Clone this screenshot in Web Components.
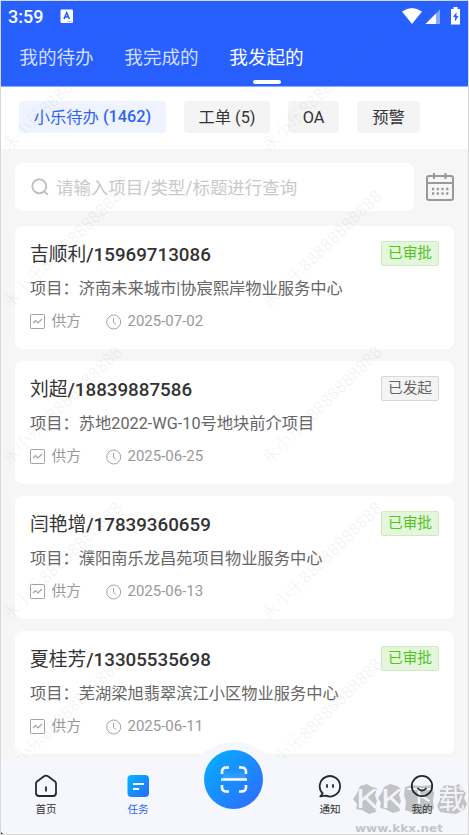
<!DOCTYPE html>
<html lang="zh-CN"><head><meta charset="utf-8"><title>我发起的</title>
<style>html,body{margin:0;padding:0;overflow:hidden}body{font-family:Roboto,"Noto Sans CJK SC",sans-serif;color:#333}</style></head>
<body><task-screen></task-screen>
<script>
const define = (name, html) => customElements.define(name, class extends HTMLElement {
  constructor() {
    super();
    const t = document.createElement('template');
    t.innerHTML = typeof html === 'function' ? html(this) : html;
    this.attachShadow({ mode: 'open' }).append(t.content.cloneNode(true));
  }
});

define('status-bar', `<style>
:host{display:flex;height:30px;align-items:center;padding:0 7px 0 7px;color:#fff;font-size:18px;font-weight:500;box-sizing:border-box}
svg{display:block}.a{margin-left:17px}.r{margin-left:auto}</style>
<span>3:59</span>
<svg class="a" width="14" height="15" viewBox="0 0 14 15"><rect x=".5" y=".5" width="12.500" height="13.500" rx="1.200" fill="#fff"/><path d="M4 10 6.700 3.700 9.400 10M5 8h3.500" fill="none" stroke="#2860ff" stroke-width="1.600"/><path d="M7.500 12.500h4" stroke="#779bff" stroke-dasharray="1 .6"/></svg>
<svg class="r" width="60" height="20" viewBox="0 0 60 20"><path d="M1 5.500Q11 -1.500 21 5.500L11 18Z" fill="#fff"/><path d="M24.500 18H39V3.500Z" fill="#8aa9ff"/><path d="M24.500 18H35V7.500Z" fill="#fff"/><path d="M50 3h2.500V1h4v2H59v15.500h-9Z" fill="#fff"/><path d="M55.500 6 52 11h2v4.500L57.500 10h-2Z" fill="#2860ff"/></svg>`);

define('top-tab', `<style>
:host{display:flex;flex-direction:column;align-items:center;width:75px;height:56px;font-size:18.600px;line-height:54px;color:#d2deff;white-space:nowrap}
:host([active]){color:#fff}
i{display:none;width:28px;height:4px;border-radius:2px;background:#fff;margin-top:-5px}
:host([active]) i{display:block}</style><slot></slot><i></i>`);

define('filter-chip', `<style>
:host{display:flex;box-sizing:border-box;height:32px;align-items:center;justify-content:center;border-radius:4px;background:#f4f4f4;font-size:16.300px;white-space:pre;padding-bottom:2px}
:host([latin]){padding-bottom:0}
:host([active]){background:#eef3ff;color:#2f63f5}</style><slot></slot>`);

define('search-row', `<style>
:host{display:flex;align-items:center;margin:14px 14px 15px;height:48px}
.box{display:flex;align-items:center;flex:none;width:399px;height:48px;border-radius:8px;background:#fff;color:#c8c9cc;font-size:17.450px;box-sizing:border-box;padding-left:16px;white-space:nowrap}
.box svg{margin-right:7px}.box span{padding-bottom:2px}.cal{flex:none;margin-left:11px}</style>
<div class="box"><svg width="18" height="18" viewBox="0 0 18 18" fill="none" stroke="#bcbdc0" stroke-width="1.800"><circle cx="8.300" cy="8.300" r="7"/><path d="m13.300 13.300 3.500 3.500"/></svg><span>请输入项目/类型/标题进行查询</span></div>
<svg class="cal" width="30" height="30" viewBox="0 0 30 30" fill="none" stroke="#999"><rect x="2" y="4" width="26" height="24" rx="2" stroke-width="2"/><path d="M2 11h26M9 1v6M20.500 1v6" stroke-width="2"/><path d="M7 17h18M7 21.500h18" stroke-width="2.300" stroke-dasharray="2.200 2.500"/></svg>`);

define('status-tag', `<style>
:host{display:flex;box-sizing:border-box;width:58px;height:25px;align-items:center;justify-content:center;border:1px solid #cdebc2;border-radius:2px;background:#e4f6dc;color:#52c41a;font-size:14.700px;line-height:22px;padding-bottom:1px}
:host([plain]){border-color:#d8d8d8;background:#f4f4f4;color:#666}</style><slot></slot>`);

define('task-card', `<style>
:host{display:block;box-sizing:border-box;height:123px;margin:0 14px 12px;padding:15px;border-radius:8px;background:#fff}
header{display:flex;justify-content:space-between;height:28px}
.name{font-size:18.750px;line-height:29px;color:#333}
.project{font-size:16.250px;line-height:24px;margin-top:8px;color:#666;white-space:nowrap}
footer{display:flex;align-items:center;height:20px;margin-top:10px;font-size:15px;line-height:20px;color:#999}
svg{display:block;flex:none;margin-top:1px}.kind{display:block;width:54px;margin-left:6.500px;padding-bottom:1px;font-size:14.700px}.date{margin-left:6px;padding-bottom:1px}</style>
<header><span class="name"><slot name="name"></slot></span><slot name="state"></slot></header>
<div class="project">项目：<slot name="project"></slot></div>
<footer><svg width="15" height="16" viewBox="0 0 15 16" fill="none" stroke="#a4a4a4"><rect x=".5" y=".5" width="14" height="14" rx=".7"/><path d="m3 9 2.500-2.500 2.500 2.500 4-4" stroke-width="1.200"/></svg><span class="kind">供方</span>
<svg width="16" height="16" viewBox="0 0 16 16" fill="none" stroke="#a4a4a4"><circle cx="7.700" cy="8" r="7"/><path d="M7.500 4v4.500l2.500 2"/></svg><span class="date"><slot name="date"></slot></span></footer>`);

define('water-mark', `<style>
:host{position:absolute;inset:0;overflow:hidden;pointer-events:none;color:rgba(50,50,50,.06);font-size:17.300px}
span{position:absolute;width:162px;height:18px;line-height:18px;display:flex;justify-content:center;white-space:nowrap;letter-spacing:.1px;transform:rotate(-44.500deg)}</style>` +
[91,248,404,560,716].flatMap(y => [61,321].map(x => `<span style="left:${x-81}px;top:${y-9}px">永小乐88888888888</span>`)).join(''));

const icons = {
  home: '<path d="M2 9.500Q2 8.300 3 7.500L10 2.300Q12 1 14 2.300L21 7.500Q22 8.300 22 9.500V19Q22 22 19 22H5Q2 22 2 19Z"/><path d="M12 12.500v5"/>',
  task: '<defs><linearGradient id="g" x1="0" y1="0" x2="1" y2="1"><stop stop-color="#00b8ff"/><stop offset="1" stop-color="#2c69ff"/></linearGradient></defs><rect x="1.500" y="1" width="21.500" height="22" rx="4" fill="url(#g)" stroke="none"/><path d="M7 10h11M7 15h6" stroke="#fff" stroke-width="2"/>',
  chat: '<path d="M4.700 19.500A10.200 10.200 0 1 1 8 21.700L2.300 22.300Z"/><path d="M9 10.300v3.400M15 10.300v3.400"/>',
  me: '<circle cx="12" cy="12" r="10.200"/><path d="M7.500 14Q12 19 16.500 14"/>'
};
define('nav-item', el => `<style>
:host{display:flex;flex-direction:column;align-items:center;width:92px;padding-top:16px;font-size:10.600px;color:#333;box-sizing:border-box}
:host([active]){color:#2f63f5}svg{display:block}span{line-height:15px;margin-top:4px}</style>
<svg width="24" height="24" viewBox="0 0 24 24" fill="none" stroke="#26282e" stroke-width="1.800" stroke-linejoin="round">${icons[el.getAttribute('icon')]}</svg><span><slot></slot></span>`);

define('scan-button', `<style>:host{display:block;width:59px;height:59px;margin-top:-8px}svg{display:block}</style>
<svg width="59" height="59" viewBox="0 0 59 59"><defs><linearGradient id="b" x1=".1" y1=".1" x2=".9" y2=".9"><stop stop-color="#08aaff"/><stop offset="1" stop-color="#2c6fff"/></linearGradient><linearGradient id="l" x2="0" y2="1"><stop stop-color="#64b9ff" stop-opacity="0"/><stop offset="1" stop-color="#64b9ff" stop-opacity=".5"/></linearGradient></defs><circle cx="29.500" cy="29.500" r="29.500" fill="url(#b)"/><path fill="url(#l)" d="M19 20h23v9H19Z"/><path d="M17 29.500h26M18 24V22q0-4.500 4.500-4.500H25M35 17.500h2.500q4.500 0 4.500 4.500v2M18 35v2q0 4.500 4.500 4.500H25M35 41.500h2.500q4.500 0 4.500-4.500v-2" fill="none" stroke="#fff" stroke-width="2.600"/></svg>`);

define('site-badge', `<style>:host{position:absolute;left:352px;top:39px;width:115px;height:54px}svg{display:block}</style>
<svg width="115" height="54" viewBox="0 0 115 54"><g fill="#c2c3c7"><path d="m7 5 7-2 5 3 5 1-2 7 2 6-2 6 1 5-7 2-7-4-6-1 1-5-4-5 4-6Z"/><path d="m31 6 6-3 7 2 4 3-2 6 2 6-2 5 1 5-7 2-8-4-5-1 1-5-3-5 4-6Z"/><path d="m52 6 7-2 8 1 12-1 2 8-1 8 1 7-5 5-13 1-11-4 1-8-2-7Z"/><path d="m87 9 5-5 9 1 5-2 4 6 3 3-2 5 3 6-3 6-8 4-9-1-7-1-3-6 3-6Z"/></g>
<g fill="#f3f4f8"><text x="3" y="27" font-size="26" textLength="22" lengthAdjust="spacingAndGlyphs">K</text><text x="28" y="27" font-size="26" textLength="22" lengthAdjust="spacingAndGlyphs">K</text><text x="53" y="28" font-size="27">下</text><text x="85" y="28" font-size="27">载</text></g>
<text x="2" y="51" fill="#c4c5c9" font-family="DejaVu Sans" font-weight="700" font-size="11" textLength="88" lengthAdjust="spacingAndGlyphs">www.kkx.net</text></svg>`);

define('bottom-nav', `<style>
:host{position:absolute;left:0;right:0;bottom:0;height:92px}
.bg{position:absolute;inset:0}
nav{position:relative;display:flex;margin-left:-1px;padding-top:16px;height:76px;width:468px}
nav div{width:100px;box-sizing:border-box;padding-right:1px;display:flex;justify-content:center}
.bg path{fill:#f5f7fc}</style>
<svg class="bg" width="467" height="92" viewBox="0 0 467 92"><path d="M0 16.500H182C203 16.500 209 0 233 0S263 16.500 284 16.500H467V92H0Z"/></svg><site-badge></site-badge>
<nav><nav-item icon="home">首页</nav-item><nav-item icon="task" active>任务</nav-item><div><scan-button></scan-button></div><nav-item icon="chat">通知</nav-item><nav-item icon="me">我的</nav-item></nav>`);

const rows = [
  ['吉顺利','/15969713086','济南未来城市|协宸熙岸物业服务中心','2025-07-02','已审批'],
  ['刘超','/18839887586','苏地2022-WG-10号地块前介项目','2025-06-25','已发起'],
  ['闫艳增','/17839360659','濮阳南乐龙昌苑项目物业服务中心','2025-06-13','已审批'],
  ['夏桂芳','/13305535698','芜湖梁旭翡翠滨江小区物业服务中心','2025-06-11','已审批']
];
define('task-screen', `<style>
:host{display:block;position:relative;box-sizing:border-box;width:469px;height:835px;background:#d8d8d8;padding:1px;overflow:hidden}
main{position:relative;width:467px;height:833px;background:#f6f6f6;overflow:hidden;border-bottom-left-radius:4px}
b{font-weight:500}
.top{height:85px;background:#2860ff;border-bottom:1px solid #91adff}
.tabs{display:flex;gap:30px;padding-left:18px;height:55px}
.chips{display:flex;gap:18px;padding:14px 18px 16px;background:#fff}
.corner{position:absolute;left:1px;bottom:1px;width:6px;height:6px;background:#222}</style>
<div class="corner"></div><main><div class="top"><status-bar></status-bar><div class="tabs"><top-tab>我的待办</top-tab><top-tab>我完成的</top-tab><top-tab active>我发起的</top-tab></div></div>
<div class="chips"><filter-chip active style="width:147px">小乐待办 <b>(1462)</b></filter-chip><filter-chip style="width:86px">工单 (5)</filter-chip><filter-chip latin style="width:51px">OA</filter-chip><filter-chip style="width:63px">预警</filter-chip></div>
<search-row></search-row>${rows.map(r => `<task-card><span slot="name">${r[0]}<b>${r[1]}</b></span><status-tag slot="state"${r[4]==='已发起'?' plain':''}>${r[4]}</status-tag><span slot="project">${r[2]}</span><span slot="date">${r[3]}</span></task-card>`).join('')}
<water-mark></water-mark><bottom-nav></bottom-nav></main>`);
</script></body></html>
